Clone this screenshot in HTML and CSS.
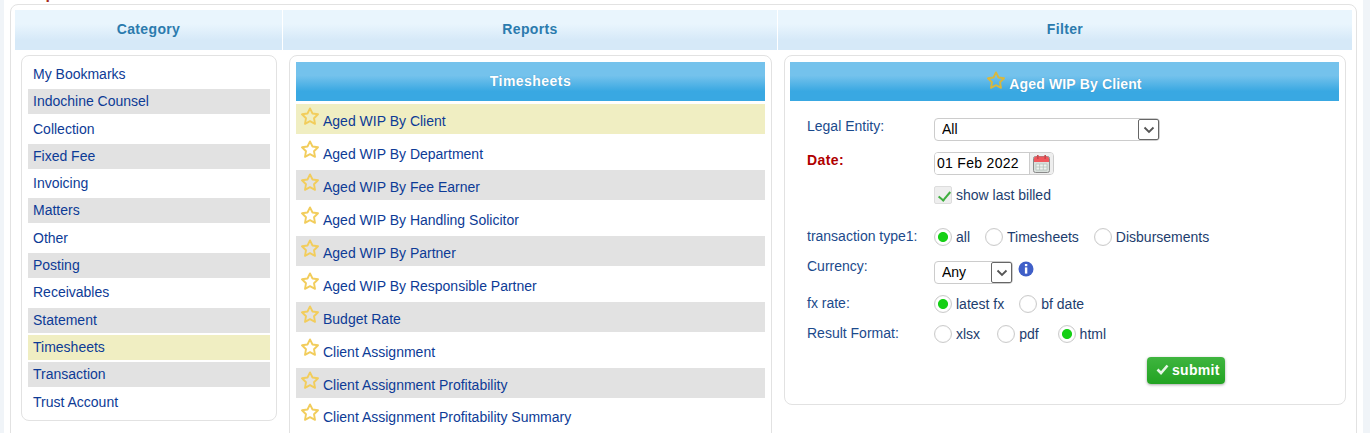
FILE: index.html
```html
<!DOCTYPE html>
<html lang="en">
<head>
<meta charset="utf-8">
<title>Reports</title>
<link rel="stylesheet" href="styles.css">
</head>
<body>
<svg class="defs" width="0" height="0" aria-hidden="true">
  <symbol id="star" viewBox="0 0 18 18"><path d="M9 1.4L11.5 6.5 17 7.3 13 11.2 14 16.8 9 14.2 4 16.8 5 11.2 1 7.3 6.5 6.5z" fill="none" stroke="currentColor" stroke-width="1.9" stroke-linejoin="round"/></symbol>
  <symbol id="chev" viewBox="0 0 12 8"><path d="M1.5 1.5L6 6l4.5-4.5" fill="none" stroke="#555" stroke-width="1.8"/></symbol>
</svg>
<div class="page">
  <div class="title"><span class="title-text">Reports</span></div>
  <div class="frame">
    <div class="head">Category</div>
    <div class="head">Reports</div>
    <div class="head">Filter</div>

    <div class="panel cat-panel">
      <ul class="cats">
        <li class="cat">My Bookmarks</li>
        <li class="cat alt">Indochine Counsel</li>
        <li class="cat">Collection</li>
        <li class="cat alt">Fixed Fee</li>
        <li class="cat">Invoicing</li>
        <li class="cat alt">Matters</li>
        <li class="cat">Other</li>
        <li class="cat alt">Posting</li>
        <li class="cat">Receivables</li>
        <li class="cat alt">Statement</li>
        <li class="cat sel">Timesheets</li>
        <li class="cat alt">Transaction</li>
        <li class="cat">Trust Account</li>
      </ul>
    </div>

    <div class="panel rep-panel">
      <div class="banner">Timesheets</div>
      <ul class="reps">
        <li class="rep sel"><svg class="star"><use href="#star"/></svg><span class="rep-name">Aged WIP By Client</span></li>
        <li class="rep"><svg class="star"><use href="#star"/></svg><span class="rep-name">Aged WIP By Department</span></li>
        <li class="rep alt"><svg class="star"><use href="#star"/></svg><span class="rep-name">Aged WIP By Fee Earner</span></li>
        <li class="rep"><svg class="star"><use href="#star"/></svg><span class="rep-name">Aged WIP By Handling Solicitor</span></li>
        <li class="rep alt"><svg class="star"><use href="#star"/></svg><span class="rep-name">Aged WIP By Partner</span></li>
        <li class="rep"><svg class="star"><use href="#star"/></svg><span class="rep-name">Aged WIP By Responsible Partner</span></li>
        <li class="rep alt"><svg class="star"><use href="#star"/></svg><span class="rep-name">Budget Rate</span></li>
        <li class="rep"><svg class="star"><use href="#star"/></svg><span class="rep-name">Client Assignment</span></li>
        <li class="rep alt"><svg class="star"><use href="#star"/></svg><span class="rep-name">Client Assignment Profitability</span></li>
        <li class="rep"><svg class="star"><use href="#star"/></svg><span class="rep-name">Client Assignment Profitability Summary</span></li>
      </ul>
    </div>

    <div class="panel filter-panel">
      <div class="banner banner-filter"><svg class="star star-filter"><use href="#star"/></svg><span class="banner-title">Aged WIP By Client</span></div>
      <form class="form">
        <div class="row row-34">
          <span class="label">Legal Entity:</span>
          <span class="select select-wide"><select class="select-field"><option>All</option></select><span class="arrow"><svg class="chev"><use href="#chev"/></svg></span></span>
        </div>
        <div class="row row-34">
          <span class="label label-req">Date:</span>
          <span class="date"><input class="date-field" value="01 Feb 2022" aria-label="Date"><span class="date-btn">
            <svg class="cal" viewBox="0 0 17 18" aria-hidden="true">
              <rect x="0.5" y="1.5" width="16" height="16" rx="2" fill="#d9e0dc" stroke="#8a8a8a"/>
              <path d="M1 3.2a2 2 0 0 1 2-1.7h11a2 2 0 0 1 2 1.7V7H1z" fill="#f0575c"/>
              <rect x="4" y="0" width="1.6" height="4" fill="#c9474b"/><rect x="11.4" y="0" width="1.6" height="4" fill="#c9474b"/>
              <path d="M3 9h11v6H3z" fill="#eef3f0" stroke="#b5c0ba" stroke-width=".8"/>
              <path d="M6.6 9v6M10.3 9v6M3 12h11" stroke="#b5c0ba" stroke-width=".8"/>
            </svg></span></span>
        </div>
        <div class="row row-42">
          <span class="label"></span>
          <label class="opt"><input class="check" type="checkbox" checked><span>show last billed</span></label>
        </div>
        <div class="row row-30">
          <span class="label">transaction type1:</span>
          <span class="opts">
            <label class="opt"><input class="radio" type="radio" name="t" checked><span>all</span></label>
            <label class="opt opt-t"><input class="radio" type="radio" name="t"><span>Timesheets</span></label>
            <label class="opt opt-d"><input class="radio" type="radio" name="t"><span>Disbursements</span></label>
          </span>
        </div>
        <div class="row row-37">
          <span class="label label-cur">Currency:</span>
          <span class="select select-cur"><select class="select-field"><option>Any</option></select><span class="arrow"><svg class="chev"><use href="#chev"/></svg></span></span>
          <svg class="info" viewBox="0 0 16 16" aria-hidden="true"><circle cx="8" cy="8" r="7.5" fill="#3f5fc8"/><rect x="6.9" y="3" width="2.4" height="2.2" fill="#fff"/><rect x="6.9" y="6.4" width="2.4" height="6.2" fill="#fff"/></svg>
        </div>
        <div class="row row-30">
          <span class="label">fx rate:</span>
          <span class="opts">
            <label class="opt"><input class="radio" type="radio" name="f" checked><span>latest fx</span></label>
            <label class="opt opt-bf"><input class="radio" type="radio" name="f"><span>bf date</span></label>
          </span>
        </div>
        <div class="row row-32">
          <span class="label">Result Format:</span>
          <span class="opts">
            <label class="opt"><input class="radio" type="radio" name="r"><span>xlsx</span></label>
            <label class="opt opt-pdf"><input class="radio" type="radio" name="r"><span>pdf</span></label>
            <label class="opt opt-html"><input class="radio" type="radio" name="r" checked><span>html</span></label>
          </span>
        </div>
        <div class="actions">
          <button class="submit" type="button"><svg class="tick" viewBox="0 0 13 11" aria-hidden="true"><path d="M1.5 5.5l3.5 3.5 6.5-7.5" fill="none" stroke="#e6f5e6" stroke-width="2.6"/></svg>submit</button>
        </div>
      </form>
    </div>
  </div>
</div>
</body>
</html>
```
FILE: styles.css
```css
* { box-sizing: border-box; }
html, body { margin: 0; height: 433px; overflow: hidden; }
body { background: #f0f4f8; font: 14px/16px "Liberation Sans", Arial, sans-serif; color: #0d3b96; }
.defs { position: absolute; }
ul { list-style: none; margin: 0; padding: 0; }

.page { margin: 0 7px 0 4px; padding: 0 6px; height: 433px; background: #fff; overflow: hidden; }
.title { height: 4px; padding-left: 15px; overflow: hidden; }
.title-text { display: block; margin-top: -6px; line-height: 0; font-size: 16px; font-weight: bold; color: #a52a1a; }

.frame { display: grid; grid-template-columns: 267px 494px 574px; column-gap: 1px; row-gap: 5px; align-items: start; align-content: start;
  padding: 5px 4px; border: 1px solid #e2e2e2; border-radius: 8px; min-height: 600px; }
.head { height: 40px; line-height: 39px; text-align: center; font-weight: bold; letter-spacing: .35px; color: #2b7bae;
  background: linear-gradient(#e9f5fd 0, #e9f5fd 35%, #d6e9f8 75%, #d6e9f8 100%); }

.panel { border: 1px solid #e2e2e2; border-radius: 8px; padding: 6px; background: #fff; }
.cat-panel { margin: 0 5px 0 6px; padding-bottom: 5px; }
.rep-panel { margin: 0 5px 0 6px; padding: 6px 6px 40px; }
.filter-panel { margin: 0 6px; padding: 6px 6px 0 5px; }

.cats { display: grid; row-gap: 2.3px; }
.cat { height: 25px; line-height: 25px; padding-left: 5px; }
.alt { background: #e2e2e2; }
.sel { background: #f0eec2; }

.banner { height: 39px; line-height: 38px; text-align: center; font-weight: bold; letter-spacing: .45px; color: #fff;
  text-shadow: 0 0 1px rgba(0, 60, 110, .35);
  background: linear-gradient(#74c2ec 0, #74c2ec 35%, #39a8e2 75%, #39a8e2 100%); }
.banner-filter { display: flex; justify-content: center; align-items: flex-start; gap: 4px; }
.banner-title { margin-top: 14px; line-height: 16px; letter-spacing: .15px; }

.reps { display: grid; row-gap: 2.95px; margin-top: 3px; }
.rep { display: flex; align-items: flex-start; gap: 4px; height: 30px; padding-left: 5px; }
.star { width: 18px; height: 18px; margin-top: 3px; color: #f2cd5c; flex: none; }
.rep-name { margin-top: 9px; }
.star-filter { margin-top: 9px; color: #d8b83e; }

.form { padding: 17px 0 0 17px; }
.row { display: flex; align-items: flex-start; }
.row-34 { height: 34px; }
.row-42 { height: 42px; }
.row-30 { height: 30px; }
.row-37 { height: 37px; padding-top: 3px; }
.row-32 { height: 32px; }
.label { width: 127px; flex: none; color: #1b4a8c; }
.label-req { font-weight: bold; letter-spacing: .4px; color: #b00000; }
.label-cur { margin-top: -3px; }

.select { display: flex; height: 23px; padding: 1px; border: 1px solid #ccc; border-radius: 4px; background: #fff; }
.select-wide { width: 226px; }
.select-cur { width: 79px; }
.select-field { flex: 1; min-width: 0; appearance: none; border: 0; outline: 0; background: none; padding: 0 0 1px 6px; font: 14px "Liberation Sans", Arial, sans-serif; color: #000; }
.arrow { width: 21px; margin: -1px -1px -1px 0; display: flex; align-items: center; justify-content: center; border: 1px solid #666; border-radius: 2px; background: #fff; }
.chev { width: 12px; height: 8px; }

.date { display: flex; width: 120px; height: 23px; border: 1px solid #ccc; border-radius: 4px; overflow: hidden; background: #fff; }
.date-field { width: 95px; border: 0; outline: 0; padding: 0 0 2px 2px; border-right: 1px solid #ccc; font: 14px "Liberation Sans", Arial, sans-serif; letter-spacing: .3px; color: #000; }
.date-btn { flex: 1; display: flex; align-items: center; justify-content: center; background: #eee; }
.cal { width: 17px; height: 18px; }

.opts { display: flex; }
.opt { display: flex; align-items: center; gap: 4px; height: 18px; color: #1d3d6e; }
.opt-t { margin-left: 15px; }
.opt-d { margin-left: 15px; }
.opt-bf { margin-left: 15px; }
.opt-pdf { margin-left: 17px; }
.opt-html { margin-left: 19px; }
.radio, .check { appearance: none; width: 18px; height: 18px; margin: 0; flex: none; }
.radio { border: 1px solid #ccc; border-radius: 50%; background: #fff; box-shadow: inset 0 0 1px #ddd; }
.radio:checked { background: radial-gradient(circle, #16d016 0, #16d016 4.6px, #fff 5.4px); }
.check { border: 1px solid #ddd; border-radius: 2px; background-color: #eee; position: relative; }
.check::after { content: ""; position: absolute; left: 6px; top: 2px; width: 5px; height: 10px; border: solid #3fae3f; border-width: 0 2px 2px 0; transform: rotate(40deg); }

.info { width: 16px; height: 16px; margin-left: 5px; }

.actions { display: flex; justify-content: flex-end; padding: 0 114px 20px 0; }
.submit { display: flex; align-items: center; gap: 3px; width: 78px; height: 27px; padding: 0 0 2px 9px; border: 0; border-radius: 4px;
  font: bold 14px "Liberation Sans", Arial, sans-serif; letter-spacing: .3px; color: #fff;
  background: linear-gradient(#3fb53f, #22a322); box-shadow: 0 1px 3px rgba(0, 0, 0, .35); }
.tick { width: 13px; height: 11px; }
```
